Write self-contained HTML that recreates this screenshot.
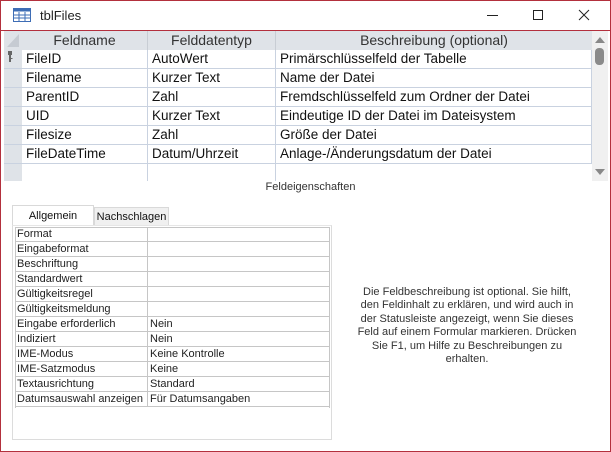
<!DOCTYPE html>
<html><head><meta charset="utf-8"><style>
*{margin:0;padding:0;box-sizing:border-box}
body{width:611px;height:452px;background:#fff;position:relative;overflow:hidden;font-family:"Liberation Sans",sans-serif;color:#222}
.frame{position:absolute;left:0;top:0;width:611px;height:452px;border:1px solid #b3303d;}
.abs{position:absolute}
.gh{position:absolute;top:31px;height:19px;background:#dfe3e8;border-right:1px solid #c8cdd4;font-size:14px;color:#333;text-align:center;line-height:19px}
.cell{position:absolute;height:19px;border-bottom:1px solid #c9d2e0;border-right:1px solid #c9d2e0;font-size:13.5px;line-height:18px;padding-left:4px;white-space:nowrap;color:#111}
.sel{position:absolute;left:4px;width:18px;height:19px;background:#dfe3e8;border-bottom:1px solid #c9d2e0}
.pr{position:absolute;left:15px;width:314px;height:15px;border-bottom:1px solid #c6c6c6;font-size:11px;line-height:14px;color:#222}
.pr span{position:absolute;top:0}
</style></head><body>
<div class="frame"></div>
<svg class="abs" style="left:13px;top:8px" width="18" height="14" viewBox="0 0 18 14"><rect x="0.5" y="0.5" width="17" height="13" fill="#fff" stroke="#3e6db5"/><rect x="0.5" y="0.5" width="17" height="3" fill="#3e6db5"/><path d="M6 4v9M12 4v9M1 7h16M1 10h16" stroke="#3e6db5"/></svg>
<div class="abs" style="left:40px;top:8px;font-size:13px;color:#222">tblFiles</div>
<div class="abs" style="left:487px;top:15px;width:11px;height:1px;background:#222"></div>
<div class="abs" style="left:533px;top:10px;width:10px;height:10px;border:1px solid #222"></div>
<svg class="abs" style="left:578px;top:9px" width="12" height="12"><path d="M1 1L11 11M11 1L1 11" stroke="#222"/></svg>
<div class="abs" style="left:1px;top:30px;width:609px;height:1px;background:#b3303d"></div>
<div class="abs" style="left:4px;top:31px;width:588px;height:150px;background:#fff"></div>
<div class="gh" style="left:4px;width:18px;border-right:none"></div>
<svg class="abs" style="left:6px;top:33px" width="14" height="15"><path d="M13 1L13 14L1 14Z" fill="#c6cbd2"/></svg>
<div class="gh" style="left:22px;width:126px">Feldname</div>
<div class="gh" style="left:148px;width:128px">Felddatentyp</div>
<div class="gh" style="left:276px;width:316px;border-right:none">Beschreibung (optional)</div>
<div class="sel" style="top:50px"></div>
<svg class="abs" style="left:7px;top:51px" width="6" height="12"><rect x="1" y="0" width="4" height="4" fill="#666"/><rect x="2" y="4" width="2" height="7" fill="#666"/><rect x="3.5" y="7" width="2" height="1" fill="#666"/></svg>
<div class="sel" style="top:69px"></div><div class="sel" style="top:88px"></div><div class="sel" style="top:107px"></div><div class="sel" style="top:126px"></div><div class="sel" style="top:145px"></div><div class="sel" style="top:164px;height:17px;border:none"></div>

<div class="cell" style="left:22px;top:50px;width:126px">FileID</div><div class="cell" style="left:148px;top:50px;width:128px">AutoWert</div><div class="cell" style="left:276px;top:50px;width:316px">Primärschlüsselfeld der Tabelle</div>
<div class="cell" style="left:22px;top:69px;width:126px">Filename</div><div class="cell" style="left:148px;top:69px;width:128px">Kurzer Text</div><div class="cell" style="left:276px;top:69px;width:316px">Name der Datei</div>
<div class="cell" style="left:22px;top:88px;width:126px">ParentID</div><div class="cell" style="left:148px;top:88px;width:128px">Zahl</div><div class="cell" style="left:276px;top:88px;width:316px">Fremdschlüsselfeld zum Ordner der Datei</div>
<div class="cell" style="left:22px;top:107px;width:126px">UID</div><div class="cell" style="left:148px;top:107px;width:128px">Kurzer Text</div><div class="cell" style="left:276px;top:107px;width:316px">Eindeutige ID der Datei im Dateisystem</div>
<div class="cell" style="left:22px;top:126px;width:126px">Filesize</div><div class="cell" style="left:148px;top:126px;width:128px">Zahl</div><div class="cell" style="left:276px;top:126px;width:316px">Größe der Datei</div>
<div class="cell" style="left:22px;top:145px;width:126px">FileDateTime</div><div class="cell" style="left:148px;top:145px;width:128px">Datum/Uhrzeit</div><div class="cell" style="left:276px;top:145px;width:316px">Anlage-/Änderungsdatum der Datei</div>
<div class="cell" style="left:22px;top:164px;width:126px;height:17px;border-bottom:none"></div><div class="cell" style="left:148px;top:164px;width:128px;height:17px;border-bottom:none"></div>
<div class="abs" style="left:592px;top:31px;width:16px;height:150px;background:#f0f0f0"></div>
<svg class="abs" style="left:595px;top:36px" width="10" height="7"><path d="M0 7L5 1L10 7Z" fill="#888"/></svg>
<div class="abs" style="left:595px;top:48px;width:9px;height:17px;border-radius:4px;background:#8a8a8a"></div>
<svg class="abs" style="left:595px;top:169px" width="10" height="7"><path d="M0 0L5 6L10 0Z" fill="#888"/></svg>

<div class="abs" style="left:0;top:181px;width:611px;text-align:center;font-size:11px;color:#333;padding-left:10px">Feldeigenschaften</div>
<div class="abs" style="left:12px;top:205px;width:82px;height:21px;background:#fff;border:1px solid #d9d9d9;border-bottom:none;font-size:11px;text-align:center;line-height:20px;color:#111">Allgemein</div>
<div class="abs" style="left:94px;top:207px;width:75px;height:19px;background:#f0f0f0;border:1px solid #d9d9d9;border-bottom:none;font-size:11px;text-align:center;line-height:19px;color:#111">Nachschlagen</div>
<div class="abs" style="left:12px;top:225px;width:320px;height:215px;border:1px solid #dcdcdc;border-top:1px solid #e6e6e6;background:#fff"></div>
<div class="abs" style="left:15px;top:227px;width:315px;height:181px;border:1px solid #c6c6c6;border-bottom:none"></div>
<div class="abs" style="left:147px;top:227px;width:1px;height:180px;background:#c6c6c6"></div>
<div class="pr" style="top:227px"><span style="left:2px">Format</span></div>
<div class="pr" style="top:242px"><span style="left:2px">Eingabeformat</span></div>
<div class="pr" style="top:257px"><span style="left:2px">Beschriftung</span></div>
<div class="pr" style="top:272px"><span style="left:2px">Standardwert</span></div>
<div class="pr" style="top:287px"><span style="left:2px">Gültigkeitsregel</span></div>
<div class="pr" style="top:302px"><span style="left:2px">Gültigkeitsmeldung</span></div>
<div class="pr" style="top:317px"><span style="left:2px">Eingabe erforderlich</span><span style="left:135px">Nein</span></div>
<div class="pr" style="top:332px"><span style="left:2px">Indiziert</span><span style="left:135px">Nein</span></div>
<div class="pr" style="top:347px"><span style="left:2px">IME-Modus</span><span style="left:135px">Keine Kontrolle</span></div>
<div class="pr" style="top:362px"><span style="left:2px">IME-Satzmodus</span><span style="left:135px">Keine</span></div>
<div class="pr" style="top:377px"><span style="left:2px">Textausrichtung</span><span style="left:135px">Standard</span></div>
<div class="pr" style="top:392px"><span style="left:2px;width:130px;overflow:hidden;white-space:nowrap">Datumsauswahl anzeigen</span><span style="left:135px">Für Datumsangaben</span></div>
<div class="abs" style="left:332px;top:286px;width:270px;text-align:center;font-size:11px;line-height:13.4px;color:#333">Die Feldbeschreibung ist optional. Sie hilft,<br>den Feldinhalt zu erklären, und wird auch in<br>der Statusleiste angezeigt, wenn Sie dieses<br>Feld auf einem Formular markieren. Drücken<br>Sie F1, um Hilfe zu Beschreibungen zu<br>erhalten.</div>
</body></html>
